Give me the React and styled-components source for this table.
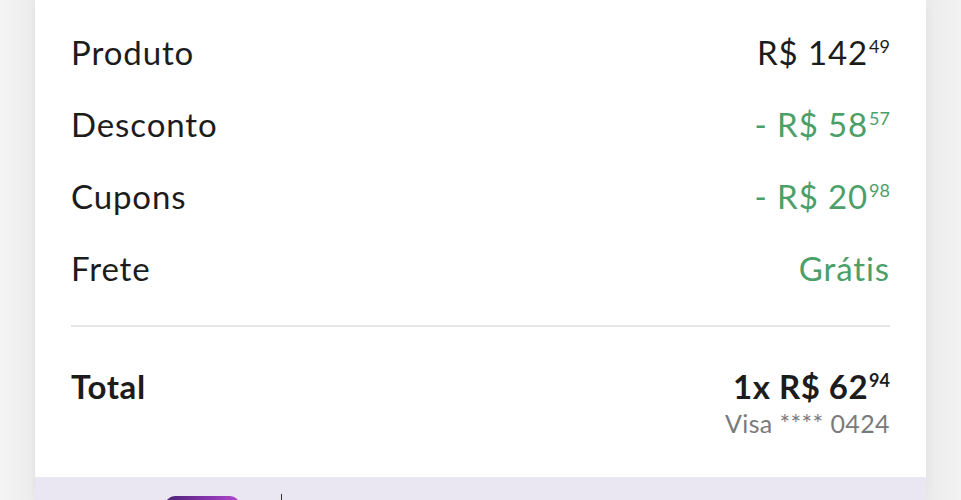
import React from "react";
import styled, { createGlobalStyle } from "styled-components";

const Global = createGlobalStyle`
  html, body { margin: 0; padding: 0; background: #f2f2f2; }
  body { font-family: "Lato", "Open Sans", sans-serif; -webkit-font-smoothing: antialiased; }
`;

const Page = styled.div`
  width: 961px;
  height: 500px;
  overflow: hidden;
  background: linear-gradient(90deg, #f4f4f4 0px, #ececec 35px, #ececec 926px, #f2f2f2 961px);
  display: flex;
  justify-content: center;
`;

const Card = styled.div`
  width: 891px;
  display: flex;
  flex-direction: column;
  background: #fff;
  box-shadow: 0 0 12px rgba(0, 0, 0, 0.05);
`;

const Summary = styled.div`
  flex-shrink: 0;
  height: 477px;
  box-sizing: border-box;
  padding: 16px 36px 0 36px;
  display: flex;
  flex-direction: column;
`;

const Row = styled.div`
  display: flex;
  justify-content: space-between;
  align-items: baseline;
  height: 72px;
  line-height: 72px;
  font-size: 33px;
  letter-spacing: 0.9px;
  color: #1c1c1c;
`;

const Label = styled.span`
  font-weight: 400;
`;

const Value = styled.span`
  color: ${(p) => (p.$green ? "#4c9f69" : "#1c1c1c")};
  white-space: nowrap;
`;

const Cents = styled.span`
  font-size: 18px;
  line-height: 0;
  letter-spacing: 0;
  vertical-align: 12px;
  margin-left: 1px;
`;

const Divider = styled.hr`
  margin: 21px 0 0 0;
  border: none;
  height: 2px;
  background: #e6e6e6;
`;

const TotalRow = styled.div`
  display: flex;
  justify-content: space-between;
  align-items: flex-start;
  padding-top: 39px;
`;

const TotalLabel = styled.span`
  font-size: 33px;
  font-weight: 700;
  line-height: 40px;
  letter-spacing: 0.6px;
  color: #1c1c1c;
`;

const TotalRight = styled.div`
  display: flex;
  flex-direction: column;
  align-items: flex-end;
`;

const TotalValue = styled.span`
  font-size: 33px;
  font-weight: 700;
  line-height: 40px;
  letter-spacing: 0.5px;
  color: #1c1c1c;
  white-space: nowrap;
`;

const CardInfo = styled.span`
  font-size: 25px;
  line-height: 34px;
  color: #7b7b7b;
  letter-spacing: 0.4px;
`;

const Footer = styled.div`
  flex: 1;
  min-height: 0;
  overflow: hidden;
  background: #ebe7f2;
  display: flex;
  align-items: flex-start;
  padding: 17px 0 0 130px;
  gap: 41px;
`;

const Pill = styled.div`
  flex-shrink: 0;
  width: 75px;
  height: 20px;
  margin-top: 2px;
  border-radius: 12px;
  background: linear-gradient(90deg, #4b2176, #8a35b0 60%, #b04ccc);
`;

const Bar = styled.div`
  flex-shrink: 0;
  width: 1px;
  height: 10px;
  background: #333;
`;

const rows = [
  { label: "Produto", value: "R$ 142", cents: "49" },
  { label: "Desconto", value: "- R$ 58", cents: "57", green: true },
  { label: "Cupons", value: "- R$ 20", cents: "98", green: true },
  { label: "Frete", value: "Grátis", green: true },
];

export default function App() {
  return (
    <>
      <Global />
      <Page>
        <Card>
          <Summary>
            {rows.map((r) => (
              <Row key={r.label}>
                <Label>{r.label}</Label>
                <Value $green={r.green}>
                  {r.value}
                  {r.cents && <Cents>{r.cents}</Cents>}
                </Value>
              </Row>
            ))}
            <Divider />
            <TotalRow>
              <TotalLabel>Total</TotalLabel>
              <TotalRight>
                <TotalValue>
                  1x R$ 62<Cents>94</Cents>
                </TotalValue>
                <CardInfo>Visa **** 0424</CardInfo>
              </TotalRight>
            </TotalRow>
          </Summary>
          <Footer>
            <Pill />
            <Bar />
          </Footer>
        </Card>
      </Page>
    </>
  );
}
